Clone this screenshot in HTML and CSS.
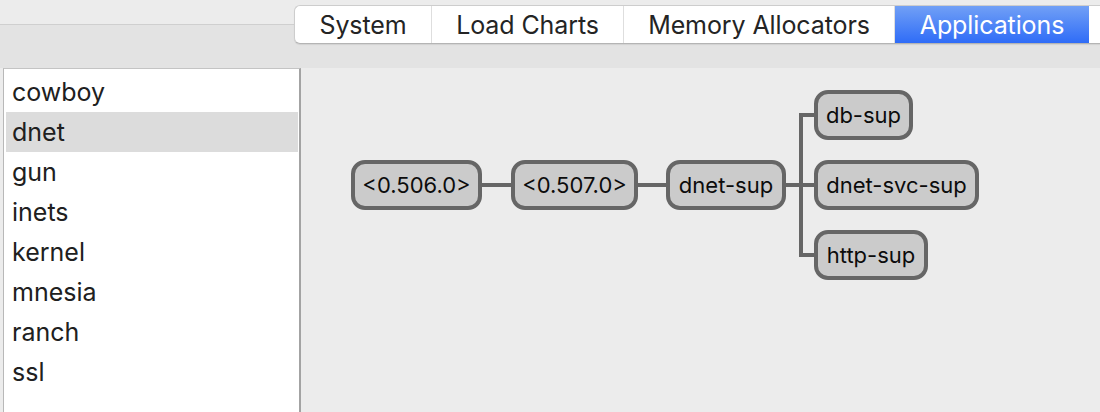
FILE: index.html
```html
<!DOCTYPE html>
<html>
<head>
<meta charset="utf-8">
<link rel="stylesheet" href="styles.css">
</head>
<body>
<div class="header">
  <div class="tabs">
    <div class="tab tab-system">System</div>
    <div class="tab tab-load">Load Charts</div>
    <div class="tab tab-mem">Memory Allocators</div>
    <div class="tab tab-apps active">Applications</div>
    <div class="tab tab-more"></div>
  </div>
</div>
<div class="main">
  <div class="applist">
    <div class="row">cowboy</div>
    <div class="row selected">dnet</div>
    <div class="row">gun</div>
    <div class="row">inets</div>
    <div class="row">kernel</div>
    <div class="row">mnesia</div>
    <div class="row">ranch</div>
    <div class="row">ssl</div>
  </div>
  <div class="canvas">
    <div class="edge h e1"></div>
    <div class="edge h e2"></div>
    <div class="edge h e3"></div>
    <div class="edge v e4"></div>
    <div class="edge h e5"></div>
    <div class="edge h e6"></div>
    <div class="edge h e7"></div>
    <div class="node n1">&lt;0.506.0&gt;</div>
    <div class="node n2">&lt;0.507.0&gt;</div>
    <div class="node n3">dnet-sup</div>
    <div class="node n4">db-sup</div>
    <div class="node n5">dnet-svc-sup</div>
    <div class="node n6">http-sup</div>
  </div>
</div>
</body>
</html>
```

FILE: styles.css
```css
html, body {
  margin: 0;
  padding: 0;
}
body {
  width: 1100px;
  height: 412px;
  overflow: hidden;
  background: #ececec;
  font-family: Inter, "Liberation Sans", sans-serif;
  color: #222;
}
.header {
  height: 68px;
  box-sizing: border-box;
  padding: 5px 0 0 294px;
  background: linear-gradient(to bottom, #ececec 0, #ececec 24px, #cfcfcf 24px, #cfcfcf 25px, #e3e3e3 25px, #e3e3e3 68px);
}
.tabs {
  display: flex;
  height: 39px;
  box-sizing: border-box;
  border: 1px solid #cdcdcd;
  border-bottom-color: #b4b4b4;
  border-right: none;
  border-radius: 6px 0 0 6px;
  background: #fff;
  overflow: hidden;
  box-shadow: 0 1px 1px rgba(0,0,0,0.08);
}
.tab {
  display: flex;
  align-items: center;
  justify-content: center;
  font-size: 25px;
  letter-spacing: -0.1px;
  color: #242424;
  border-right: 1px solid #dedede;
  box-sizing: border-box;
  height: 100%;
}
.tab-system { width: 137px; }
.tab-load { width: 192px; }
.tab-mem { width: 271px; }
.tab-apps { width: 194px; }
.tab-more { flex: 1; border-right: none; }
.tab.active {
  background: linear-gradient(to bottom, #71a0f6, #2f6cf7);
  color: #fff;
  border-right: none;
}
.main {
  display: flex;
  height: 344px;
}
.applist {
  margin-left: 3px;
  width: 298px;
  box-sizing: border-box;
  background: #fff;
  border-top: 1px solid #c4c4c4;
  border-left: 1px solid #b8b8b8;
  border-right: 2px solid #a3a3a3;
  padding: 3px 1px 0 2px;
}
.row {
  height: 40px;
  line-height: 40px;
  padding-left: 6px;
  font-size: 25px;
  color: #202020;
}
.row.selected {
  background: #dcdcdc;
}
.canvas {
  flex: 1;
  position: relative;
  background: #ececec;
}
.node {
  position: absolute;
  height: 50px;
  box-sizing: border-box;
  border: 4px solid #666;
  border-radius: 14px;
  background: #cbcbcb;
  display: flex;
  align-items: center;
  justify-content: center;
  font-size: 22px;
  color: #0c0c0c;
  white-space: nowrap;
}
.n1 { left: 50px; top: 92px; width: 131px; }
.n2 { left: 210px; top: 92px; width: 127px; }
.n3 { left: 365px; top: 92px; width: 120px; }
.n4 { left: 513px; top: 22px; width: 99px; }
.n5 { left: 513px; top: 92px; width: 165px; }
.n6 { left: 513px; top: 162px; width: 114px; }
.edge {
  position: absolute;
  background: #666;
}
.edge.h { height: 4px; }
.edge.v { width: 4px; }
.e1 { left: 180px; width: 32px; top: 115px; }
.e2 { left: 336px; width: 31px; top: 115px; }
.e3 { left: 484px; width: 16px; top: 115px; }
.e4 { left: 498px; top: 45px; height: 144px; }
.e5 { left: 498px; width: 17px; top: 45px; }
.e6 { left: 498px; width: 17px; top: 115px; }
.e7 { left: 498px; width: 17px; top: 185px; }
```
